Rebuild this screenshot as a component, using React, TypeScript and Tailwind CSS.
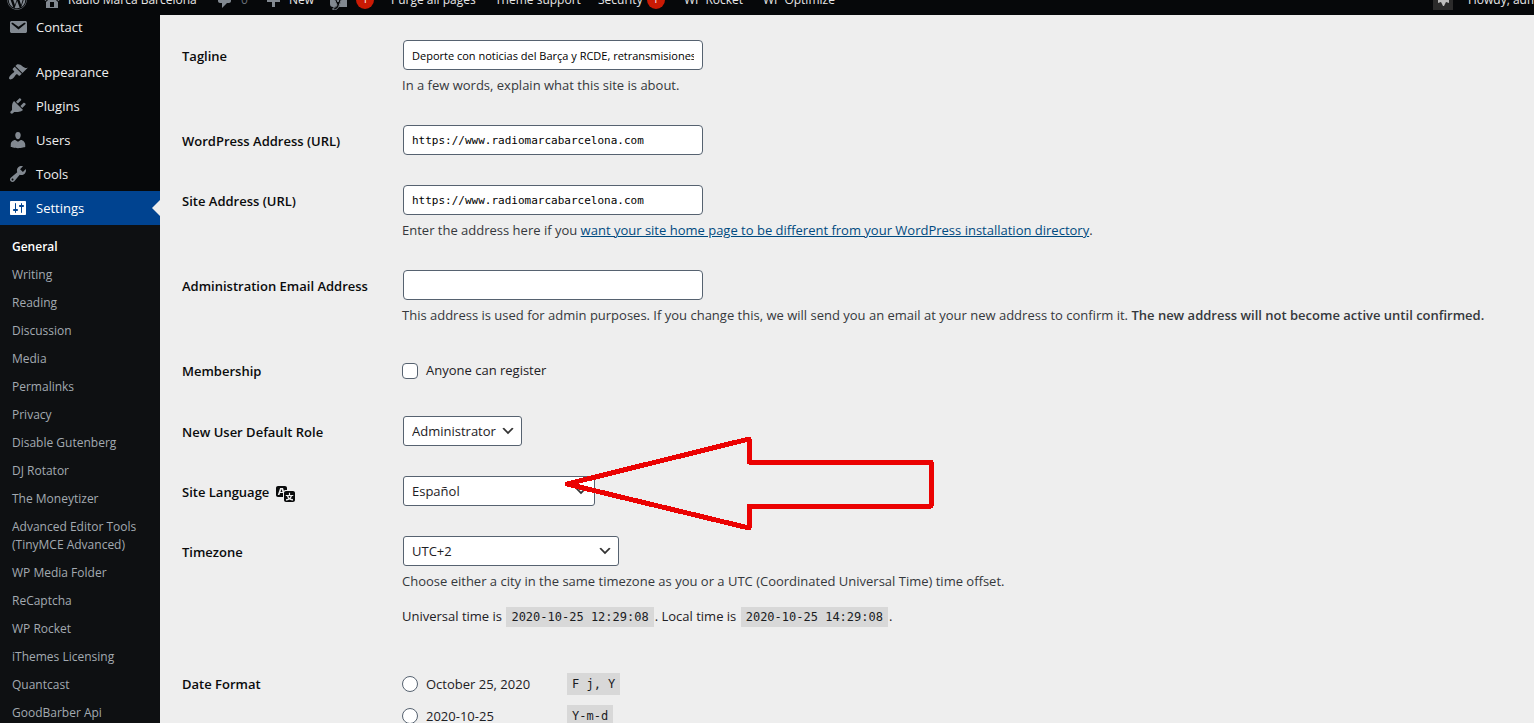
import type { ReactNode } from "react";
import { FaWordpress } from "react-icons/fa";

const ICONS = {
    email: "M3.87 4h13.25C18.37 4 19 4.59 19 5.79v8.42c0 1.19-.63 1.79-1.88 1.79H3.87c-1.25 0-1.88-.6-1.88-1.79V5.79c0-1.2.63-1.79 1.88-1.79zm6.62 8.6l6.74-5.53c.24-.2.43-.66.13-1.07-.29-.41-.82-.42-1.17-.17l-5.7 3.86L4.8 5.83c-.35-.25-.88-.24-1.17.17-.3.41-.11.87.13 1.07z",
    appearance:
        "M14.48 11.06L7.41 3.99l1.5-1.5c.5-.56 2.3-.47 3.51.32 1.21.8 1.43 1.28 2.91 2.1 1.18.64 2.45 1.26 4.45.85zm-.71.71L6.7 4.7 4.93 6.47c-.39.39-.39 1.02 0 1.41l1.06 1.06c.39.39.39 1.03 0 1.42-.6.6-1.43 1.11-2.21 1.69-.35.26-.7.53-1.01.84C1.43 14.23.4 16.08 1.4 17.07c.99 1 2.84-.03 4.18-1.36.31-.31.58-.66.85-1.02.57-.78 1.08-1.61 1.69-2.21.39-.39 1.02-.39 1.41 0l1.06 1.06c.39.39 1.02.39 1.41 0z",
    plugins:
        "M13.11 4.36L9.87 7.6 8 5.73l3.24-3.24c.35-.34 1.05-.2 1.56.32.52.51.66 1.21.31 1.55zm-8 1.77l.91-1.12 9.01 9.01-1.19.84c-.71.71-2.63 1.16-3.82 1.16H6.14L4.9 17.26c-.59.59-1.54.59-2.12 0-.59-.58-.59-1.53 0-2.12l1.24-1.24v-3.88c0-1.13.4-3.19 1.09-3.89zm7.26 3.97l3.24-3.24c.34-.35 1.04-.21 1.55.31.52.51.66 1.21.31 1.55l-3.24 3.25z",
    users: "M10 9.25c-2.27 0-2.73-3.44-2.73-3.44C7 4.02 7.82 2 9.97 2c2.16 0 2.98 2.02 2.71 3.81 0 0-.41 3.44-2.68 3.44zm0 2.57L12.72 10c2.39 0 4.52 2.33 4.52 4.53v2.49s-3.65 1.13-7.24 1.13c-3.65 0-7.24-1.13-7.24-1.13v-2.49c0-2.25 1.94-4.48 4.47-4.48z",
    tools: "M16.68 9.77c-1.34 1.34-3.3 1.67-4.95.99l-5.41 6.52c-.99.99-2.59.99-3.58 0s-.99-2.59 0-3.57l6.52-5.42c-.68-1.65-.35-3.61.99-4.95 1.28-1.28 3.12-1.62 4.72-1.06l-2.89 2.89 2.82 2.82 2.86-2.87c.53 1.58.18 3.39-1.08 4.65zM3.81 16.21c.4.39 1.04.39 1.43 0 .4-.4.4-1.04 0-1.43-.39-.4-1.03-.4-1.43 0-.39.39-.39 1.03 0 1.43z",
    settings:
        "M18 16V4c0-.55-.45-1-1-1H3c-.55 0-1 .45-1 1v12c0 .55.45 1 1 1h14c.55 0 1-.45 1-1zM8 11h1c.55 0 1 .45 1 1s-.45 1-1 1H8v1.5c0 .28-.22.5-.5.5s-.5-.22-.5-.5V13H6c-.55 0-1-.45-1-1s.45-1 1-1h1V5.5c0-.28.22-.5.5-.5s.5.22.5.5V11zm5-2h-1c-.55 0-1-.45-1-1s.45-1 1-1h1V5.5c0-.28.22-.5.5-.5s.5.22.5.5V7h1c.55 0 1 .45 1 1s-.45 1-1 1h-1v5.5c0 .28-.22.5-.5.5s-.5-.22-.5-.5V9z",
    home: "M16 8.5l1.53 1.53-1.06 1.06L10 4.6l-6.47 6.49-1.06-1.06L10 2.5l4 4v-2h2v4zm-6-2.46l6 5.99V18H4v-5.97zM12 17v-5H8v5h4z",
    comments: "M5 2h9c1.1 0 2 .9 2 2v7c0 1.1-.9 2-2 2h-2l-5 5v-5H5c-1.1 0-2-.9-2-2V4c0-1.1.9-2 2-2z",
    plus: "M17 9v3h-5v5H9v-5H4V9h5V4h3v5h5z",
    translation:
        "M11 7H9.49c-.63 0-1.25.3-1.59.7L7 5H4.13l-2.39 7h1.69l.74-2H7v4H2c-1.1 0-2-.9-2-2V5c0-1.1.9-2 2-2h7c1.1 0 2 .9 2 2v2zM6.51 9H4.49l1-2.93zM10 8h7c1.1 0 2 .9 2 2v7c0 1.1-.9 2-2 2h-7c-1.1 0-2-.9-2-2v-7c0-1.1.9-2 2-2zm7.25 5v-1.08h-3.17V9.75h-1.16v2.17H9.75V13h1.28c.11.85.56 1.85 1.28 2.62-.87.36-1.89.62-2.31.62-.01.02.22.97.2 1.46.84 0 2.21-.5 3.28-1.15 1.09.65 2.48 1.15 3.34 1.15-.02-.49.2-1.44.2-1.46-.43 0-1.49-.27-2.38-.63.7-.77 1.14-1.77 1.25-2.61h1.36zm-3.81 1.93c-.5-.46-.85-1.13-1.01-1.93h2.09c-.17.8-.51 1.47-1 1.93l-.04.03s-.03-.02-.04-.03z",
    chevron: "M5 6l5 5 5-5 2 1-7 7-7-7 2-1z",
};

type IconName = keyof typeof ICONS;

const MENU: { label: string; icon: IconName }[] = [
    { label: "Appearance", icon: "appearance" },
    { label: "Plugins", icon: "plugins" },
    { label: "Users", icon: "users" },
    { label: "Tools", icon: "tools" },
    { label: "Settings", icon: "settings" },
];

const SUBMENU = [
    "General",
    "Writing",
    "Reading",
    "Discussion",
    "Media",
    "Permalinks",
    "Privacy",
    "Disable Gutenberg",
    "DJ Rotator",
    "The Moneytizer",
    "Advanced Editor Tools (TinyMCE Advanced)",
    "WP Media Folder",
    "ReCaptcha",
    "WP Rocket",
    "iThemes Licensing",
    "Quantcast",
    "GoodBarber Api",
];

const DATE_FORMATS = [
    { label: "October 25, 2020", code: "F j, Y" },
    { label: "2020-10-25", code: "Y-m-d" },
];

const inputClass =
    "ml-px block h-[30px] w-[300px] rounded border border-[#566270] bg-white px-2 text-[11px] text-black";

function Dashicon({ name, className = "size-5" }: { name: IconName; className?: string }) {
    return (
        <svg viewBox="0 0 20 20" fill="currentColor" className={`shrink-0 ${className}`} aria-hidden="true">
            <path d={ICONS[name]} />
        </svg>
    );
}

function MenuItem({ label, icon }: { label: string; icon: IconName }) {
    const active = label === "Settings";
    return (
        <a
            href="#"
            className={`relative flex h-[34px] items-center gap-2 pl-2 text-[13px] ${active ? "bg-[#004390] text-white" : "text-[#eeeeee]"}`}
        >
            <Dashicon name={icon} className={`size-5 ${active ? "text-white" : "text-[#828991]"}`} />
            <span className="pt-0.5">{label}</span>
            {active && (
                <span className="absolute right-0 top-[9px] border-y-8 border-r-8 border-y-transparent border-r-[#eeeeee]" />
            )}
        </a>
    );
}

function YoastIcon() {
    return (
        <svg viewBox="0 0 18 20" className="h-5 w-[18px] shrink-0 text-[#828991]" aria-hidden="true">
            <path d="M3 2h9L8 13 5 6H3l4 9c-1 2-2 2-4 2a3 3 0 0 1-3-3V5a3 3 0 0 1 3-3z" fill="currentColor" />
            <path d="M14 2h1a2 2 0 0 1 2 2v13H9z" fill="currentColor" />
            <path d="M3 6l4 9c-1 2-2 3-4 3v2c4 0 5-2 6-4l5-14h-2L8 12 5 6z" fill="#06080a" stroke="currentColor" strokeWidth="1" />
        </svg>
    );
}

function Badge() {
    return (
        <span className="flex size-[18px] items-center justify-center rounded-full bg-[#ca1a04] text-[10px] text-white">
            1
        </span>
    );
}

function AdminBar() {
    return (
        <header className="fixed inset-x-0 top-0 z-10 flex h-[15px] items-end overflow-hidden bg-[#06080a] text-xs text-[#e6e6e6]">
            <div className="flex h-[31px] shrink-0 flex-1 items-center whitespace-nowrap pl-[7px]">
                <a href="#" aria-label="WordPress" className="text-[#828991]">
                    <FaWordpress size={20} />
                </a>
                <a href="#" className="ml-[15px] flex w-[173px] items-center gap-[6px]">
                    <Dashicon name="home" className="size-5 text-[#828991]" />
                    Radio Marca Barcelona
                </a>
                <a href="#" className="flex w-[48px] items-center gap-[6px] text-[#686f77]">
                    <Dashicon name="comments" className="size-5 text-[#828991]" />0
                </a>
                <a href="#" className="flex w-[67px] items-center gap-[6px]">
                    <Dashicon name="plus" className="size-5 text-[#828991]" />
                    New
                </a>
                <a href="#" className="flex w-[61px] items-center gap-2">
                    <YoastIcon />
                    <Badge />
                </a>
                <a href="#" className="w-[104px]">Purge all pages</a>
                <a href="#" className="w-[103px]">Theme support</a>
                <a href="#" className="flex w-[86px] items-center gap-1">
                    Security
                    <Badge />
                </a>
                <a href="#" className="w-[79px]">WP Rocket</a>
                <a href="#">WP Optimize</a>
            </div>
            <a href="#" className="flex h-[31px] w-[101px] shrink-0 items-center gap-[15px] overflow-hidden whitespace-nowrap">
                <svg viewBox="0 0 20 20" className="size-5 shrink-0">
                    <rect width="20" height="20" fill="#2b2b2b" />
                    <path d="M7 3h7v7h2v3l-3-1-2 4h-1l-2-4-3 1v-3h2z" fill="#bdbdbd" />
                </svg>
                Howdy, adm
            </a>
        </header>
    );
}

function Row({ label, htmlFor, extra, children }: { label: string; htmlFor?: string; extra?: ReactNode; children: ReactNode }) {
    return (
        <div className="flex">
            <div className="flex w-[220px] shrink-0 items-start gap-[7px] pt-[22px] text-[13px] font-semibold leading-[18px] text-[#0a0b0c]">
                {htmlFor ? <label htmlFor={htmlFor}>{label}</label> : <span>{label}</span>}
                {extra}
            </div>
            <div className="min-w-0 flex-1 py-[15px]">{children}</div>
        </div>
    );
}

function Description({ children }: { children: ReactNode }) {
    return <p className="pt-[5px] leading-5 text-[#35383c]">{children}</p>;
}

function Select({ id, value, width }: { id: string; value: string; width: string }) {
    return (
        <div className={`relative ml-px ${width}`}>
            <select
                id={id}
                className="block h-[30px] w-full appearance-none rounded-[3px] border border-[#566270] bg-white pl-2 pr-6 pt-0.5 text-[13px] text-[#1d2024]"
            >
                <option>{value}</option>
            </select>
            <Dashicon name="chevron" className="pointer-events-none absolute right-[6px] top-[7px] size-4 text-[#333]" />
        </div>
    );
}

function Code({ children }: { children: ReactNode }) {
    return (
        <code className="mx-px bg-[#d8d8d8] px-[5px] py-[3px] font-['DejaVu_Sans_Mono',monospace] text-xs text-[#1a1c1f]">
            {children}
        </code>
    );
}

export default function App() {
    return (
        <div className="flex h-screen overflow-hidden bg-[#eeeeee] font-['Open_Sans',sans-serif] text-[13px] text-[#1d2024]">
            <AdminBar />

            {/* Side menu */}
            <nav className="w-40 shrink-0 bg-[#06080a] pt-[10px]">
                <MenuItem label="Contact" icon="email" />
                <div className="h-[11px]" />
                {MENU.map((item) => (
                    <MenuItem key={item.label} {...item} />
                ))}
                <ul className="bg-[#0e1012] py-2">
                    {SUBMENU.map((item, i) => (
                        <li key={item}>
                            <a
                                href="#"
                                className={`block px-3 py-[5px] text-xs leading-[18px] ${i === 0 ? "font-semibold text-white" : "text-[#a3aab1]"}`}
                            >
                                {item}
                            </a>
                        </li>
                    ))}
                </ul>
            </nav>

            {/* General settings form */}
            <form className="min-w-0 flex-1 pl-[22px] pt-[25px]">
                <Row label="Tagline" htmlFor="tagline">
                    <input
                        id="tagline"
                        type="text"
                        className={inputClass}
                        defaultValue="Deporte con noticias del Barça y RCDE, retransmisiones"
                    />
                    <Description>In a few words, explain what this site is about.</Description>
                </Row>
                <Row label="WordPress Address (URL)" htmlFor="siteurl">
                    <input
                        id="siteurl"
                        type="url"
                        className={`${inputClass} font-['DejaVu_Sans_Mono',monospace]`}
                        defaultValue="https://www.radiomarcabarcelona.com"
                    />
                </Row>
                <Row label="Site Address (URL)" htmlFor="home">
                    <input
                        id="home"
                        type="url"
                        className={`${inputClass} font-['DejaVu_Sans_Mono',monospace]`}
                        defaultValue="https://www.radiomarcabarcelona.com"
                    />
                    <Description>
                        Enter the address here if you{" "}
                        <a href="#" className="text-[#004a80] underline">
                            want your site home page to be different from your WordPress installation directory
                        </a>
                        .
                    </Description>
                </Row>
                <Row label="Administration Email Address" htmlFor="email">
                    <input id="email" type="email" className={inputClass} />
                    <Description>
                        This address is used for admin purposes. If you change this, we will send you an email at your new
                        address to confirm it. <strong className="font-semibold">The new address will not become active until confirmed.</strong>
                    </Description>
                </Row>
                <Row label="Membership">
                    <label className="flex h-[31px] items-center gap-2">
                        <input
                            type="checkbox"
                            className="size-4 appearance-none rounded border border-[#566270] bg-white"
                        />
                        Anyone can register
                    </label>
                </Row>
                <Row label="New User Default Role" htmlFor="role">
                    <Select id="role" value="Administrator" width="w-[119px]" />
                </Row>
                <Row
                    label="Site Language"
                    htmlFor="lang"
                    extra={<Dashicon name="translation" className="size-5" />}
                >
                    <div className="relative">
                        <Select id="lang" value="Español" width="w-[192px]" />
                        {/* Red pointer over the language field */}
                        <svg
                            width="372"
                            height="98"
                            viewBox="0 0 372 98"
                            className="pointer-events-none absolute -top-10 left-[162px]"
                            shapeRendering="crispEdges"
                        >
                            <path
                                d="M3 48L185 3V26H367V70H185V92Z"
                                fill="none"
                                stroke="#eb0202"
                                strokeWidth="5"
                                strokeLinejoin="round"
                            />
                        </svg>
                    </div>
                </Row>
                <Row label="Timezone" htmlFor="tz">
                    <Select id="tz" value="UTC+2" width="w-[216px]" />
                    <Description>
                        Choose either a city in the same timezone as you or a UTC (Coordinated Universal Time) time offset.
                    </Description>
                    <p className="mb-[11px] mt-[15px] leading-[21px]">
                        Universal time is <Code>2020-10-25 12:29:08</Code>. Local time is <Code>2020-10-25 14:29:08</Code>.
                    </p>
                </Row>
                <Row label="Date Format">
                    {DATE_FORMATS.map((f) => (
                        <label key={f.code} className="flex h-8 items-center">
                            <input
                                type="radio"
                                name="date_format"
                                className="mr-2 size-4 shrink-0 appearance-none rounded-full border border-[#566270] bg-white"
                            />
                            <span className="w-[140px] pt-0.5">{f.label}</span>
                            <Code>{f.code}</Code>
                        </label>
                    ))}
                </Row>
            </form>
        </div>
    );
}
